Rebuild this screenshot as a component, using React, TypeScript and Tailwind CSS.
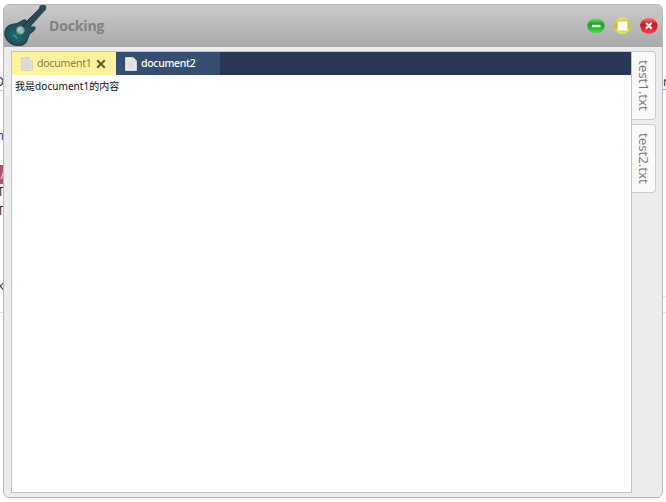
function Guitar() {
  return (
    <svg viewBox="-0.8 0 46 46" className="h-[46px] w-[46px] shrink-0">
      <path d="M20 22.5 L34 9.5 L35 5.5 L39 4.6 L41.5 6 L41.3 9.5 L38.3 12.5 L25.5 27 Z" fill="#2b4a56" />
      <path
        d="M0.8 30 C2.5 25.5 7 24.2 12 23.8 C15.5 23.3 17 20.5 19.8 20 C21.5 20 20.8 22.3 21.2 23.5 C22.5 25.8 25 27.8 29.8 27.2 C30.8 29.3 28.5 31 26 32.5 C22.8 34.8 23.3 38.5 21.5 41.5 C18.5 46.3 10.5 46.5 5.5 42.8 C1 39.3 -0.8 34.5 0.8 30Z"
        fill="#205460"
        stroke="#2b3f4c"
        strokeWidth="1.5"
      />
      <path d="M5 31 C8 28 12 31 16 35 C20 37 18 42 13 42.5 C7 42 3 36 5 31Z" fill="#1b626d" />
      <path d="M17.5 28 L36 9" stroke="#1d3d49" strokeWidth="3.2" />
      <circle cx="15.6" cy="30.2" r="4.2" fill="#7ba79f" />
      <circle cx="15.6" cy="30.2" r="2.6" fill="#b5cbae" />
      <path d="M8.5 34.5 L12.5 38.5" stroke="#4d8288" strokeWidth="1.8" />
      <path d="M10 37 L35.5 10" stroke="#54757c" strokeWidth="0.6" />
    </svg>
  );
}

function PageIcon({ faded }: { faded?: boolean }) {
  return (
    <svg viewBox="0 0 12 14" className="h-[14px] w-[12px] shrink-0">
      <path d="M0.5 0.5 H8 L11.5 4 V13.5 H0.5Z" fill={faded ? "#e0dfd8" : "#e9eae9"} stroke={faded ? "#d0cdbb" : "#dfe2e5"} strokeWidth="0.8" />
      <path d="M8 0.5 V4 H11.5" fill="#fbfbf8" stroke="#bbb" strokeWidth="0.6" />
      <path d="M2.5 5 H7 M2.5 7 H9.5 M2.5 9 H9.5 M2.5 11 H9.5" stroke="#cfd0d0" strokeWidth="0.8" />
    </svg>
  );
}

function WindowButtons() {
  return (
    <svg viewBox="0 0 74 20" className="h-[20px] w-[74px] shrink-0">
      <defs>
        <linearGradient id="green" x1="0" y1="0" x2="0" y2="1">
          <stop offset="0" stopColor="#7ed07b" />
          <stop offset="0.4" stopColor="#1b9f2c" />
          <stop offset="1" stopColor="#3fe046" />
        </linearGradient>
        <linearGradient id="yellow" x1="0" y1="0" x2="0" y2="1">
          <stop offset="0" stopColor="#e2df7c" />
          <stop offset="0.5" stopColor="#c5bd23" />
          <stop offset="1" stopColor="#f1ed4c" />
        </linearGradient>
        <linearGradient id="red" x1="0" y1="0" x2="0" y2="1">
          <stop offset="0" stopColor="#ee8080" />
          <stop offset="0.4" stopColor="#d01520" />
          <stop offset="1" stopColor="#ff3a40" />
        </linearGradient>
      </defs>
      <rect x="1.3" y="2.5" width="17.4" height="14.6" rx="7.3" fill="url(#green)" />
      <rect x="6" y="8.8" width="8.5" height="2.4" fill="#effcec" />
      <circle cx="36.4" cy="9.8" r="8.5" fill="url(#yellow)" />
      <rect x="31.6" y="5.6" width="9.8" height="9" fill="#fffffa" />
      <ellipse cx="62.8" cy="9.8" rx="8.7" ry="7.9" fill="url(#red)" />
      <path d="M60 7 L65.6 12.6 M65.6 7 L60 12.6" stroke="#fff" strokeWidth="2.2" />
    </svg>
  );
}

function SideTab({ label }: { label: string }) {
  return (
    <div className="flex h-[69px] w-[24px] justify-center rounded-r-[4px] border border-l-0 border-[#cbcbcb] bg-[#fafafa] pt-[5px] font-['Open_Sans','Noto_Sans',sans-serif] text-[13.5px] leading-[22px] tracking-[-0.1px] text-[#787878] [writing-mode:vertical-rl]">
      <span className="-mt-[6px] [writing-mode:vertical-rl]">{label}</span>
    </div>
  );
}

// Slivers of the editor that remain visible on either side of the window.
function BackgroundSlivers() {
  return (
    <>
      <div className="absolute inset-y-0 left-0 w-[4px] overflow-hidden font-['Noto_Sans',sans-serif] text-[12px] leading-[14px] text-[#333]">
        <span className="absolute right-0 top-[75px]">D</span>
        <span className="absolute top-[90px] h-px w-full bg-[#cfcfcf]" />
        <span className="absolute right-0 top-[129px] text-[#3232cc]">n</span>
        <span className="absolute top-[165px] h-[19px] w-full bg-[#ad5663]" />
        <span className="absolute right-[-1px] top-[168px] text-[#eed5d7]">/</span>
        <span className="absolute right-0 top-[185px]">T</span>
        <span className="absolute right-0 top-[204px]">T</span>
        <span className="absolute right-0 top-[279px]">k</span>
        <span className="absolute top-[312px] h-px w-full bg-[#e2e2e2]" />
      </div>
      <div className="absolute inset-y-0 right-0 w-[3px] overflow-hidden font-['Noto_Sans',sans-serif] text-[12px] leading-[14px] text-[#333]">
        <span className="absolute left-0 top-[75px]">r</span>
        <span className="absolute top-[89px] h-px w-full bg-[#92aba2]" />
        <span className="absolute top-[296px] h-px w-full bg-[#e2e2e2]" />
        <span className="absolute top-[312px] h-px w-full bg-[#dddddd]" />
      </div>
    </>
  );
}

export default function App() {
  return (
    <div className="relative h-[502px] w-[666px] overflow-hidden bg-white pl-[3px] pt-[4px]">
      <BackgroundSlivers />
      <main className="relative flex h-[494px] w-[660px] flex-col overflow-hidden rounded-[6px] border border-[#b9b9b9] bg-[#ececec]">
        <header className="flex h-[42px] shrink-0 items-center border-b border-[#a8a8a8] bg-linear-to-b from-[#cbcbcb] to-[#a9a9a9] pr-[2px]">
          <div className="-mt-[5px]">
            <Guitar />
          </div>
          <h1 className="-ml-px font-['Open_Sans','Noto_Sans',sans-serif] text-[14px] font-bold leading-[20px] tracking-[-0.15px] text-[#818284]">
            Docking
          </h1>
          <div className="ml-auto">
            <WindowButtons />
          </div>
        </header>
        <div className="flex min-h-0 grow pb-[4px] pl-[7px] pt-[4px]">
          <section className="flex w-[621px] flex-col border border-[#c2c2c2] bg-white font-['Noto_Sans','Noto_Sans_CJK_SC',sans-serif] text-[10.5px]">
            <nav className="flex h-[23px] shrink-0 bg-[#293955]">
              <div className="flex w-[104px] items-center bg-[#fff29d] pl-[9px] text-[#85815b]">
                <PageIcon faded />
                <span className="ml-[4px] w-[58px] whitespace-nowrap pt-px tracking-[-0.2px]">document1</span>
                <svg viewBox="0 0 10 10" className="ml-px h-[10px] w-[10px]">
                  <path d="M1.2 1.2 L8.8 8.8 M8.8 1.2 L1.2 8.8" stroke="#625b36" strokeWidth="2" />
                </svg>
              </div>
              <div className="flex w-[104px] items-center bg-[#364e6f] pl-[9px] text-white">
                <PageIcon />
                <span className="ml-[4px] whitespace-nowrap pt-px font-medium tracking-[-0.3px]">document2</span>
              </div>
            </nav>
            <p className="pl-[3px] pt-[3px] text-[10px] leading-[16px] tracking-[0.05px] text-[#101010]">我是document1的内容</p>
          </section>
          <aside className="flex flex-col gap-[4px]">
            <SideTab label="test1.txt" />
            <SideTab label="test2.txt" />
          </aside>
        </div>
      </main>
    </div>
  );
}
